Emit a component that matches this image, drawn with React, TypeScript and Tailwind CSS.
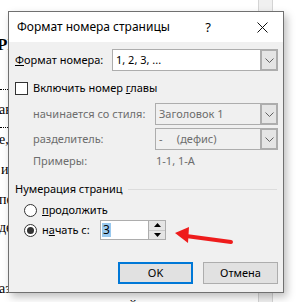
import React from "react";

const Chevron = () => (
  <svg width="9" height="5" viewBox="0 0 9 5" fill="none">
    <path d="M0.5 0.5 L4.5 4.5 L8.5 0.5" stroke="#606060" strokeWidth="1" />
  </svg>
);

function Select({
  text,
  width,
  disabled,
}: {
  text: React.ReactNode;
  width: string;
  disabled?: boolean;
}) {
  return (
    <div
      className={`flex h-[22px] border border-[#adadad] ${width} ${
        disabled ? "bg-[#f0f0f0] text-[#6d6d6d]" : "bg-white text-black"
      }`}
    >
      <div className="flex-1 flex items-center pl-[3px] whitespace-pre overflow-hidden">
        {text}
      </div>
      <div className="w-[17px] flex items-center justify-center bg-[#e5e5e5] border-l-2 border-[#adadad] border-y border-r">
        <Chevron />
      </div>
    </div>
  );
}

function Radio({ checked }: { checked?: boolean }) {
  return (
    <div className="w-[13px] h-[13px] rounded-full border border-[#333333] bg-white flex items-center justify-center">
      {checked && <div className="w-[7px] h-[7px] rounded-full bg-[#333333]" />}
    </div>
  );
}

export default function App() {
  return (
    <div
      className="relative w-[298px] h-[302px] bg-white overflow-hidden"
      style={{ fontFamily: '"Noto Sans", sans-serif' }}
    >
      {/* Document behind */}
      <div className="flex h-full">
        <div
          className="w-[30px] flex flex-col text-[14px] leading-[16px] text-black"
          style={{ fontFamily: '"Liberation Serif", serif' }}
        >
          <div className="mt-[37px] h-[16px] font-bold text-[17px] -ml-[3px]">РГ</div>
          <div className="mt-[36px] border-t border-dotted border-black w-[12px]" />
          <div className="mt-[12px] h-[16px] -ml-[1px]">ав</div>
          <div className="mt-[9px] border-t border-dotted border-black w-[12px]" />
          <div className="mt-[4px] h-[16px] -ml-[1px]">е,</div>
          <div className="mt-[14px] h-[16px] ml-[1px]">и</div>
          <div className="mt-[14px] h-[16px] -ml-[1px]">пе</div>
          <div className="mt-[12px] h-[16px] -ml-[1px]">де</div>
          <div className="mt-[45px] h-[16px] -ml-[1px]">аз</div>
        </div>
        <div className="flex-1 flex flex-col justify-end items-center pl-[38px]">
          <div
            className="text-[14px] leading-[16px] -mb-[12px]"
            style={{ fontFamily: '"Liberation Serif", serif' }}
          >
            й
          </div>
        </div>
        <div className="w-[15px] mr-[25px] ml-[60px] bg-[#f0f0f0] border-x border-[#d4d4d4]" />
      </div>

      {/* Dialog */}
      <div className="absolute left-[8px] top-[11px] w-[276px] h-[282px] border border-[#707070] bg-[#f0f0f0] shadow-[3px_4px_8px_rgba(0,0,0,0.25)] flex flex-col text-[11px] leading-[16px] text-black">
        {/* Title bar */}
        <div className="h-[30px] bg-white flex items-center pl-[8px]">
          <div className="flex-1 text-[12px]">Формат номера страницы</div>
          <div className="w-[14px] text-center text-[13px] mr-[26px]">?</div>
          <div className="w-[42px] flex items-center justify-center">
            <svg width="11" height="11" viewBox="0 0 11 11">
              <path d="M0.5 0.5 L10.5 10.5 M10.5 0.5 L0.5 10.5" stroke="#111" strokeWidth="1" />
            </svg>
          </div>
        </div>

        <div className="flex flex-col pl-[6px] pr-[5px]">
          {/* Format row */}
          <div className="mt-[7px] flex items-center h-[22px]">
            <div className="flex-1">
              <u>Ф</u>ормат номера:
            </div>
            <Select text="1, 2, 3, ..." width="w-[166px]" />
          </div>

          {/* Checkbox */}
          <div className="mt-[10px] flex items-center h-[14px]">
            <div className="w-[13px] h-[13px] border border-[#333333] bg-white" />
            <div className="ml-[5px]">
              Включить номер <u>г</u>лавы
            </div>
          </div>

          {/* Style row */}
          <div className="mt-[8px] flex items-center h-[22px] text-[#6d6d6d]">
            <div className="flex-1 pl-[18px] whitespace-nowrap">начинается со стиля:</div>
            <Select text="Заголовок 1" width="w-[123px]" disabled />
          </div>

          {/* Separator row */}
          <div className="mt-[3px] flex items-center h-[22px] text-[#6d6d6d]">
            <div className="flex-1 pl-[18px]">разделитель:</div>
            <Select text={"-     (дефис)"} width="w-[123px]" disabled />
          </div>

          {/* Examples */}
          <div className="mt-[3px] flex items-center h-[16px] text-[#6d6d6d]">
            <div className="flex-1 pl-[18px]">Примеры:</div>
            <div className="w-[123px] pl-[1px]">1-1, 1-A</div>
          </div>

          {/* Page numbering group */}
          <div className="mt-[12px] flex items-center h-[16px]">
            <div>Нумерация страниц</div>
            <div className="flex-1 h-px bg-[#dcdcdc] ml-[5px] mr-[1px]" />
          </div>

          <div className="mt-[5px] flex items-center h-[16px] pl-[9px]">
            <Radio />
            <div className="ml-[5px]">
              <u>п</u>родолжить
            </div>
          </div>

          <div className="mt-[2px] flex items-center h-[20px] pl-[9px]">
            <Radio checked />
            <div className="ml-[5px] w-[58px]">
              н<u>а</u>чать с:
            </div>
            <div className="flex h-[20px] w-[66px] border border-[#adadad] bg-white">
              <div className="flex-1 flex items-center pl-[1px]">
                <span className="bg-[#99c9ef] px-[1px] leading-[14px] text-[12px]">3</span>
              </div>
              <div className="w-[17px] flex flex-col border-l border-[#adadad]">
                <div className="flex-1 flex items-center justify-center bg-[#e5e5e5] border-b border-[#c8c8c8]">
                  <svg width="7" height="4" viewBox="0 0 7 4">
                    <path d="M0 4 L3.5 0 L7 4 Z" fill="#000" />
                  </svg>
                </div>
                <div className="flex-1 flex items-center justify-center bg-[#e5e5e5]">
                  <svg width="7" height="4" viewBox="0 0 7 4">
                    <path d="M0 0 L3.5 4 L7 0 Z" fill="#000" />
                  </svg>
                </div>
              </div>
            </div>
          </div>

          {/* Buttons */}
          <div className="mt-[22px] flex justify-end gap-[10px]">
            <div className="w-[75px] h-[22px] flex items-center justify-center bg-[#e1e1e1] border-2 border-[#0078d7]">
              OK
            </div>
            <div className="w-[75px] h-[22px] flex items-center justify-center bg-[#e1e1e1] border border-[#adadad]">
              Отмена
            </div>
          </div>
        </div>
      </div>

      {/* Red arrow annotation */}
      <svg
        className="absolute left-0 top-0 pointer-events-none"
        width="298"
        height="302"
        viewBox="0 0 298 302"
      >
        <path d="M186 236 L231 242" stroke="#ee1c1c" strokeWidth="4" strokeLinecap="round" />
        <path d="M175 233 L189 227 L188 243 Z" fill="#ee1c1c" />
      </svg>
    </div>
  );
}
